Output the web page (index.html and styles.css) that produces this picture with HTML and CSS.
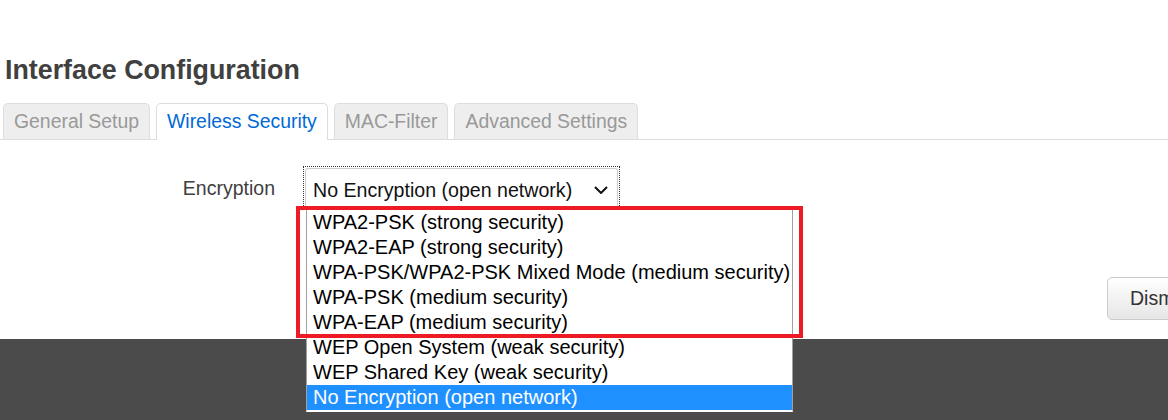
FILE: index.html
```html
<!DOCTYPE html>
<html>
<head>
<meta charset="utf-8">
<link rel="stylesheet" href="styles.css">
</head>
<body>
<div class="page">
  <h2 class="title">Interface Configuration</h2>
  <div class="tabs">
    <div class="tab">General Setup</div>
    <div class="tab active">Wireless Security</div>
    <div class="tab">MAC-Filter</div>
    <div class="tab">Advanced Settings</div>
  </div>
  <div class="form">
    <div class="row">
      <label class="label">Encryption</label>
      <div class="select-wrap">
        <div class="select">
          <span class="select-text">No Encryption (open network)</span>
          <svg class="chev" width="14" height="8" viewBox="0 0 14 8"><polyline points="1,1 7,7 13,1" fill="none" stroke="#111" stroke-width="2"/></svg>
        </div>
        <ul class="dropdown">
          <li>WPA2-PSK (strong security)</li>
          <li>WPA2-EAP (strong security)</li>
          <li>WPA-PSK/WPA2-PSK Mixed Mode (medium security)</li>
          <li>WPA-PSK (medium security)</li>
          <li>WPA-EAP (medium security)</li>
          <li>WEP Open System (weak security)</li>
          <li>WEP Shared Key (weak security)</li>
          <li class="sel">No Encryption (open network)</li>
        </ul>
        <div class="annot"></div>
      </div>
    </div>
  </div>
  <div class="actions">
    <button class="btn">Dismiss</button>
  </div>
  <div class="footer"></div>
</div>
</body>
</html>
```
FILE: styles.css
```css
html, body {
  margin: 0;
  padding: 0;
  background: #fff;
  overflow: hidden;
}
body {
  font-family: "Liberation Sans", Arial, sans-serif;
  width: 1168px;
  height: 420px;
}
.page {
  padding-top: 55px;
}
.title {
  margin: 0 0 0 5px;
  font-size: 26.8px;
  line-height: 31px;
  font-weight: bold;
  color: #404040;
}
.tabs {
  margin-top: 17px;
  display: flex;
  gap: 6px;
  padding-left: 3px;
  border-bottom: 1px solid #ddd;
}
.tab {
  font-size: 19.4px;
  line-height: 22px;
  padding: 6px 10px 7px 10px;
  border: 1px solid #ddd;
  border-bottom: 0;
  border-radius: 5px 5px 0 0;
  background: #eee;
  color: #999;
  white-space: nowrap;
}
.tab.active {
  background: #fff;
  color: #0069d6;
  margin-bottom: -1px;
  padding-bottom: 8px;
}
.form {
  padding-top: 26px;
}
.row {
  display: flex;
  align-items: flex-start;
}
.label {
  width: 303px;
  text-align: right;
  padding-right: 28px;
  box-sizing: border-box;
  font-size: 19.5px;
  line-height: 22px;
  padding-top: 11px;
  color: #404040;
}
.select-wrap {
  position: relative;
  width: 317px;
  height: 42px;
  border: 1px dotted #333;
  box-sizing: border-box;
  padding: 1px;
}
.select {
  height: 100%;
  box-sizing: border-box;
  border: 1px solid #ccc;
  border-bottom: 0;
  border-radius: 3px 3px 0 0;
  display: flex;
  align-items: center;
  justify-content: space-between;
  padding: 0 8px 0 7px;
  font-size: 19.6px;
  color: #111;
}
.select-text {
  padding-top: 6px;
}
.chev {
  margin-top: 5px;
  margin-right: 1px;
}
.dropdown {
  position: absolute;
  left: 2px;
  top: 42px;
  width: 487px;
  margin: 0;
  padding: 0;
  list-style: none;
  background: #fff;
  border: 1px solid #a0a0a0;
  border-bottom: 2px solid #fff;
  box-sizing: border-box;
  z-index: 2;
}
.dropdown li {
  height: 25px;
  line-height: 24px;
  font-size: 20px;
  padding-left: 6px;
  color: #000;
  white-space: nowrap;
}
.dropdown li.sel {
  background: #1e90ff;
  color: #fff;
}
.annot {
  position: absolute;
  left: -8px;
  top: 39px;
  width: 507px;
  height: 132px;
  border: 4.5px solid #ed1c24;
  box-sizing: border-box;
  z-index: 3;
}
.actions {
  margin-top: 69px;
  display: flex;
  padding-left: 1107px;
  height: 43px;
}
.btn {
  flex: none;
  height: 43px;
  padding: 0 22px;
  font-family: "Liberation Sans", Arial, sans-serif;
  font-size: 19.5px;
  color: #333;
  border: 1px solid #ccc;
  border-radius: 5px;
  background: linear-gradient(#fff, #e6e6e6);
  white-space: nowrap;
}
.footer {
  margin-top: 19px;
  height: 82px;
  background: #4b4b4b;
}
```
